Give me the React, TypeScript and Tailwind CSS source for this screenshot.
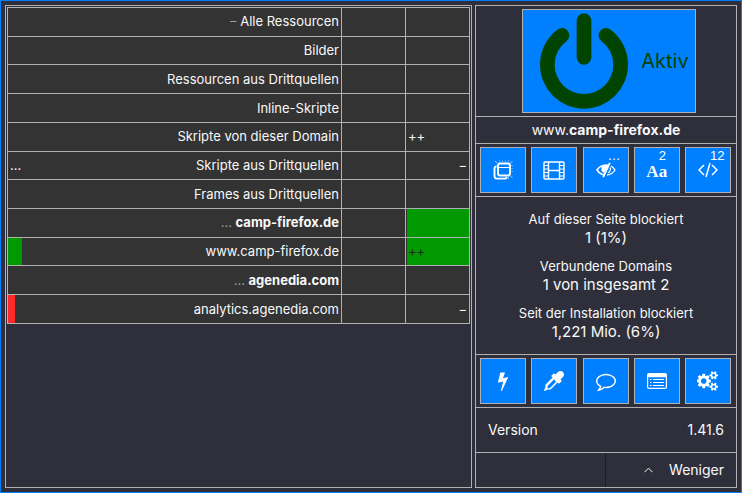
import clsx from 'clsx'
import type { ReactNode } from 'react'

type Row = {
  label: string
  prefix?: string
  count?: string
  bold?: boolean
  bar?: 'green' | 'red'
  allowed?: boolean
  plus?: boolean
  minus?: boolean
}

const ROWS: Row[] = [
  { label: 'Alle Ressourcen', prefix: '–' },
  { label: 'Bilder' },
  { label: 'Ressourcen aus Drittquellen' },
  { label: 'Inline-Skripte' },
  { label: 'Skripte von dieser Domain', plus: true },
  { label: 'Skripte aus Drittquellen', count: '…', minus: true },
  { label: 'Frames aus Drittquellen' },
  { label: 'camp-firefox.de', prefix: '…', bold: true, allowed: true },
  { label: 'www.camp-firefox.de', bar: 'green', allowed: true, plus: true },
  { label: 'agenedia.com', prefix: '…', bold: true },
  { label: 'analytics.agenedia.com', bar: 'red', minus: true },
]

const STATS = [
  { label: 'Auf dieser Seite blockiert', value: '1 (1%)' },
  { label: 'Verbundene Domains', value: '1 von insgesamt 2' },
  { label: 'Seit der Installation blockiert', value: '1,221 Mio. (6%)' },
]

function PowerIcon() {
  return (
    <svg viewBox="128 0 1536 1664" className="h-[96px] w-[88px] shrink-0" fill="currentColor" aria-hidden="true">
      <path d="M1664 896q0 156-61 298t-164 245-245 164-298 61-298-61-245-164-164-245-61-298q0-182 80.5-343t226.5-270q43-32 95.5-25t83.5 50q32 42 24.5 94.5t-49.5 84.5q-98 74-151.5 181t-53.5 228q0 104 40.5 198.5t109.5 163.5 163.5 109.5 198.5 40.5 198.5-40.5 163.5-109.5 109.5-163.5 40.5-198.5q0-121-53.5-228t-151.5-181q-42-32-49.5-84.5t24.5-94.5q31-43 84-50t95 25q146 109 226.5 270t80.5 343zm-640-768v640q0 52-38 90t-90 38-90-38-38-90v-640q0-52 38-90t90-38 90 38 38 90z" />
    </svg>
  )
}

function PopupIcon() {
  return (
    <svg viewBox="0 0 20 20" className="size-5" fill="none" stroke="currentColor" aria-hidden="true">
      <rect x="5" y="3.500" width="12" height="12" rx="2" strokeWidth="1.900" />
      <path d="M5 7.500h11" strokeWidth="1" />
      <path d="M3.500 6.500q-2 .2-2 2.200v7.300q0 2.600 2.600 2.600h7.400q2 0 2.200-1.800" strokeWidth="1.900" />
      <path d="M2 1l2 2M6.500.5v1.200M9.500.5v1.200M12.500.5v1.200M17.500 3l2-2M15.500.5v1.200M18.500 5.500h1M18.500 8.500h1M18.500 11.500h1M17.500 16l2 2M15.500 17.500v1.500" strokeWidth=".8" strokeOpacity=".75" />
    </svg>
  )
}

function FilmIcon() {
  return (
    <svg viewBox="0 0 22 19" className="h-[19px] w-[22px]" fill="none" stroke="currentColor" aria-hidden="true">
      <rect x="1" y="1" width="20" height="17" rx="1" strokeWidth="1.4" />
      <path d="M5.5 1v17M16.5 1v17M5.5 9.5h11" strokeWidth="1.4" />
      <path d="M1 4.5h4.5M1 8h4.5M1 11.5h4.5M1 15h4.5M16.5 4.5H21M16.5 8H21M16.5 11.5H21M16.5 15H21" strokeWidth="1.2" />
    </svg>
  )
}

function EyeOffIcon() {
  return (
    <svg viewBox="0 0 20 16" className="h-4 w-5" fill="none" stroke="currentColor" aria-hidden="true">
      <path d="M9 13Q4 12.500 1 8q3-4.700 9-5 1.500 0 3 .5" strokeWidth="1.6" />
      <path d="M15 4q2.500 1.500 4 4-2.800 4.600-8 5" strokeWidth="1.3" />
      <path d="M6 4.500q-1.500 3 .5 5.500l1.500 1L12 4Q8.500 2.500 6 4.500z" fill="currentColor" stroke="none" />
      <path d="M14.200 5.500q1 3.500-2.200 5.500" strokeWidth="1.2" />
      <path d="M13.800.8l-6.600 14.400" strokeWidth="1.8" />
    </svg>
  )
}

function CodeIcon() {
  return (
    <svg viewBox="0 0 20 16" className="h-4 w-5" fill="none" stroke="currentColor" strokeWidth="1.5" aria-hidden="true">
      <path d="M6 3L1 8l5 5M14 3l5 5-5 5M12 1L8 15" />
    </svg>
  )
}

function BoltIcon() {
  return (
    <svg viewBox="0 0 1792 1792" className="size-5" fill="currentColor" aria-hidden="true">
      <path d="M1333 566q18 20 7 44l-540 1157q-13 25-42 25-4 0-14-2-17-5-25.5-19t-4.500-30l197-808-406 101q-4 1-12 1-18 0-31-11-18-15-13-39l201-825q4-16 16.500-26t29.500-10h328q19 0 32 12.500t13 29.500q0 8-5 18l-171 463 396-98q8-2 12-2 19 0 34 17z" />
    </svg>
  )
}

function DropperIcon() {
  return (
    <svg viewBox="0 0 1792 1792" className="size-5" fill="currentColor" aria-hidden="true">
      <path d="M1698 94q94 94 94 226.500t-94 225.500l-225 223 104 104q10 10 10 23t-10 23l-210 210q-10 10-23 10t-23-10l-105-105-603 603q-37 37-90 37h-203l-256 128-64-64 128-256v-203q0-53 37-90l603-603-105-105q-10-10-10-23t10-23l210-210q10-10 23-10t23 10l104 104 223-225q93-94 225.500-94t226.500 94zm-1186 1442l576-576-192-192-576 576v192h192z" />
    </svg>
  )
}

function CommentIcon() {
  return (
    <svg viewBox="0 0 1792 1792" className="size-5" fill="currentColor" aria-hidden="true">
      <path d="M896 384q-204 0-381.500 69.500t-282 187.500-104.500 255q0 112 71.500 213.500t201.500 175.500l87 50-27 96q-24 91-70 172 152-63 275-171l43-38 57 6q69 8 130 8 204 0 381.500-69.500t282-187.500 104.500-255-104.500-255-282-187.500-381.500-69.500zm896 512q0 174-120 321.500t-326 233-450 85.500q-70 0-145-8-198 175-460 242-49 14-114 22h-5q-15 0-27-10.500t-16-27.500q-3-4-.5-13l6.500-19 13-17 8-9 31-34.500 34.500-38 31-39.500 32.500-51 27-59 26-76q-157-89-247.500-220t-90.500-281q0-130 71-248.500t191-204.500 286-136.500 348-50.500 348 50.500 286 136.500 191 204.500 71 248.500z" />
    </svg>
  )
}

function ListIcon() {
  return (
    <svg viewBox="0 0 20 16" className="h-4 w-5" fill="none" stroke="currentColor" aria-hidden="true">
      <rect x=".6" y=".6" width="18.800" height="14.800" rx="1.500" strokeWidth="1.200" />
      <path d="M1 2.500h18" strokeWidth="3.500" />
      <path d="M3 6.500h1.500M6 6.500h11M3 9.500h1.500M6 9.500h11M3 12.500h1.500M6 12.500h11" strokeWidth="1.200" />
    </svg>
  )
}

function CogsIcon() {
  return (
    <svg viewBox="0 0 1920 1792" className="h-5 w-[22px]" fill="currentColor" aria-hidden="true">
      <path d="M832 896q0-106-75-181t-181-75-181 75-75 181 75 181 181 75 181-75 75-181zm768 512q0-52-38-90t-90-38-90 38-38 90q0 53 37.5 90.5t90.5 37.5 90.5-37.5 37.5-90.5zm0-1024q0-52-38-90t-90-38-90 38-38 90q0 53 37.5 90.5t90.5 37.5 90.5-37.5 37.5-90.5zm-384 421v185q0 10-7 19.500t-16 10.500l-155 24q-11 35-32 76 34 48 90 115 7 11 7 20 0 12-7 19-23 30-82.500 89.500t-78.500 59.500q-11 0-21-7l-115-90q-37 19-77 31-11 108-23 155-7 24-30 24h-186q-11 0-20-7.500t-10-17.500l-23-153q-34-10-75-31l-118 89q-7 7-20 7-11 0-21-8-144-133-144-160 0-9 7-19 10-14 41-53t47-61q-23-44-35-82l-152-24q-10-1-17-9.500t-7-19.500v-185q0-10 7-19.500t16-10.500l155-24q11-35 32-76-34-48-90-115-7-11-7-20 0-12 7-20 22-30 82-89t79-59q11 0 21 7l115 90q34-18 77-32 11-108 23-154 7-24 30-24h186q11 0 20 7.500t10 17.500l23 153q34 10 75 31l118-89q8-7 20-7 11 0 21 8 144 133 144 160 0 8-7 19-12 16-42 54t-45 60q23 48 34 82l152 23q10 2 17 10.500t7 19.500zm640 533v140q0 16-149 31-12 27-30 52 51 113 51 138 0 4-4 7-122 71-124 71-8 0-46-47t-52-68q-20 2-30 2t-30-2q-14 21-52 68t-46 47q-2 0-124-71-4-3-4-7 0-25 51-138-18-25-30-52-149-15-149-31v-140q0-16 149-31 13-29 30-52-51-113-51-138 0-4 4-7 4-2 35-20t59-34 30-16q8 0 46 46.500t52 67.500q20-2 30-2t30 2q51-71 92-112l6-2q4 0 124 70 4 3 4 7 0 25-51 138 17 23 30 52 149 15 149 31zm0-1024v140q0 16-149 31-12 27-30 52 51 113 51 138 0 4-4 7-122 71-124 71-8 0-46-47t-52-68q-20 2-30 2t-30-2q-14 21-52 68t-46 47q-2 0-124-71-4-3-4-7 0-25 51-138-18-25-30-52-149-15-149-31v-140q0-16 149-31 13-29 30-52-51-113-51-138 0-4 4-7 4-2 35-20t59-34 30-16q8 0 46 46.500t52 67.500q20-2 30-2t30 2q51-71 92-112l6-2q4 0 124 70 4 3 4 7 0 25-51 138 17 23 30 52 149 15 149 31z" />
    </svg>
  )
}

function ToolButton({ label, badge, children }: { label: string; badge?: string; children: ReactNode }) {
  return (
    <button
      type="button"
      aria-label={label}
      className="relative flex size-[46px] items-center justify-center border border-[#b1b1b1] bg-[#0080ff] text-white"
    >
      {children}
      {badge && (
        <span className="absolute top-0.5 left-6 font-['Liberation_Sans',sans-serif] text-[13px] leading-3">
          {badge}
        </span>
      )}
    </button>
  )
}

function FirewallTable() {
  return (
    <table className="h-[317px] w-full table-fixed border-collapse bg-[#333333] text-[13px] leading-4">
      <colgroup>
        <col />
        <col className="w-16" />
        <col className="w-16" />
      </colgroup>
      <tbody>
        {ROWS.map((row) => (
          <tr key={row.label}>
            <th scope="row" className="relative border border-[#b1b1b1] px-0.5 pt-0 pb-px text-right font-normal">
              {row.bar && (
                <span
                  className={clsx(
                    'absolute inset-y-0 left-0',
                    row.bar === 'green' ? 'w-3.5 bg-[#009900]' : 'w-[7px] bg-[#ff2a2a]',
                  )}
                />
              )}
              {row.count && <span className="float-left">{row.count}</span>}
              {row.prefix && <span className="text-[#999999]">{row.prefix} </span>}
              <span className={clsx(row.bold && 'font-bold')}>{row.label}</span>
            </th>
            <td className="border border-[#b1b1b1] p-0" />
            <td
              className={clsx(
                'border border-[#b1b1b1] px-0.5 pt-0 pb-px',
                row.allowed && 'bg-[#009900] text-[#222222] shadow-[inset_1px_0_#333333]',
                row.minus && 'text-right',
              )}
            >
              {row.plus && '++'}
              {row.minus && '−'}
            </td>
          </tr>
        ))}
      </tbody>
    </table>
  )
}

export default function App() {
  return (
    <div className="flex min-h-screen gap-[3px] border border-[#0080ff] bg-[#2f2f3b] p-1 font-[Inter,sans-serif] text-[#f9f9fa]">
      <main className="min-w-0 flex-1 border border-[#b1b1b1] p-px">
        <FirewallTable />
      </main>

      <aside className="flex w-[262px] shrink-0 flex-col divide-y divide-[#b1b1b1] border border-[#b1b1b1]">
        <div className="flex justify-center py-[3px] pl-1.5">
          <button
            type="button"
            className="flex h-[104px] items-center gap-[13px] border border-[#b1b1b1] bg-[#0080ff] pr-1.5 pl-[17px] text-[20px] text-[#004400]"
          >
            <PowerIcon />
            Aktiv
          </button>
        </div>

        <div className="text-center text-sm leading-[26px]">
          www.<b>camp-firefox.de</b>
        </div>

        <div className="flex justify-between py-[3px] pr-[5px] pl-1">
          <ToolButton label="Popups blockieren">
            <PopupIcon />
          </ToolButton>
          <ToolButton label="Große Medienelemente blockieren">
            <FilmIcon />
          </ToolButton>
          <ToolButton label="Kosmetische Filter" badge="…">
            <EyeOffIcon />
          </ToolButton>
          <ToolButton label="Externe Schriftarten" badge="2">
            <span className="pt-0.5 font-['Liberation_Serif',serif] text-[17px] leading-none font-bold">Aa</span>
          </ToolButton>
          <ToolButton label="JavaScript" badge="12">
            <CodeIcon />
          </ToolButton>
        </div>

        <dl className="flex flex-1 flex-col justify-center gap-[9px] text-center">
          {STATS.map((stat) => (
            <div key={stat.label}>
              <dt className="text-[13px] leading-[18px]">{stat.label}</dt>
              <dd className="text-[15px] leading-5">{stat.value}</dd>
            </div>
          ))}
        </dl>

        <div className="flex justify-between py-[3px] pr-[5px] pl-1">
          <ToolButton label="Element-Zapper">
            <BoltIcon />
          </ToolButton>
          <ToolButton label="Element-Auswahl">
            <DropperIcon />
          </ToolButton>
          <ToolButton label="Problem melden">
            <CommentIcon />
          </ToolButton>
          <ToolButton label="Protokoll">
            <ListIcon />
          </ToolButton>
          <ToolButton label="Einstellungen">
            <CogsIcon />
          </ToolButton>
        </div>

        <div className="flex justify-between px-3 text-sm leading-[44px]">
          <span>Version</span>
          <span>1.41.6</span>
        </div>

        <div className="grid grid-cols-2 text-sm">
          <span className="border-r border-[#1c1c26]" />
          <button type="button" className="flex h-[34px] items-center justify-end gap-4 pr-3">
            <svg viewBox="0 0 9 6" className="h-1.5 w-[9px]" fill="none" stroke="currentColor" aria-hidden="true">
              <path d="M.5 5.200l4-4 4 4" />
            </svg>
            Weniger
          </button>
        </div>
      </aside>
    </div>
  )
}
